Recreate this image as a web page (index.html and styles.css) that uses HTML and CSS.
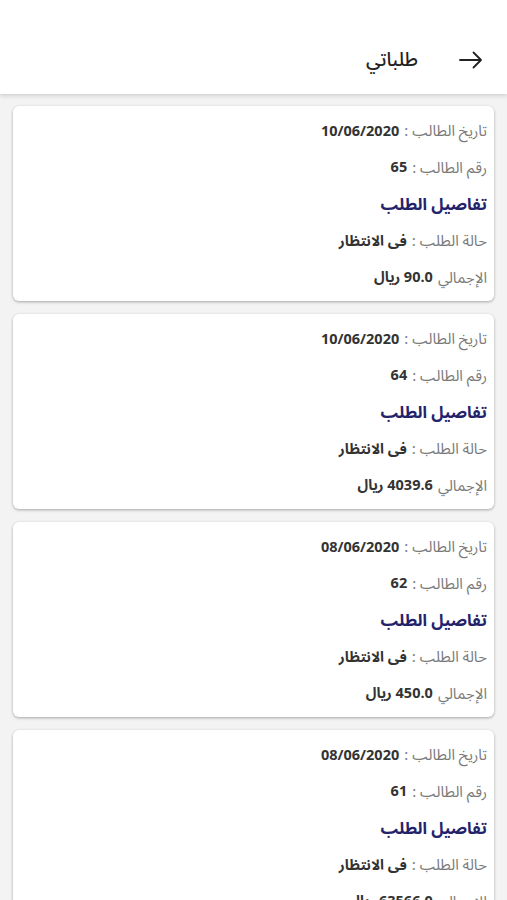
FILE: index.html
```html
<!DOCTYPE html>
<html lang="ar" dir="rtl">
<head>
<meta charset="utf-8">
<title>طلباتي</title>
<link rel="stylesheet" href="styles.css">
</head>
<body>
<header class="appbar">
  <button class="back" aria-label="رجوع">
    <svg width="26" height="24" viewBox="0 0 26 24"><path d="M2 12h21M15.5 4.5l7.5 7.5-7.5 7.5" fill="none" stroke="#222" stroke-width="1.8" stroke-linecap="round" stroke-linejoin="round"/></svg>
  </button>
  <h1 class="title">طلباتي</h1>
</header>
<main class="list">
  <section class="card">
    <div class="row"><span class="label">تاريخ الطالب :</span><span class="value">10/06/2020</span></div>
    <div class="row"><span class="label">رقم الطالب :</span><span class="value">65</span></div>
    <div class="row"><span class="details">تفاصيل الطلب</span></div>
    <div class="row"><span class="label">حالة الطلب :</span><span class="value">فى الانتظار</span></div>
    <div class="row"><span class="label">الإجمالي</span><span class="value">90.0 ريال</span></div>
  </section>
  <section class="card">
    <div class="row"><span class="label">تاريخ الطالب :</span><span class="value">10/06/2020</span></div>
    <div class="row"><span class="label">رقم الطالب :</span><span class="value">64</span></div>
    <div class="row"><span class="details">تفاصيل الطلب</span></div>
    <div class="row"><span class="label">حالة الطلب :</span><span class="value">فى الانتظار</span></div>
    <div class="row"><span class="label">الإجمالي</span><span class="value">4039.6 ريال</span></div>
  </section>
  <section class="card">
    <div class="row"><span class="label">تاريخ الطالب :</span><span class="value">08/06/2020</span></div>
    <div class="row"><span class="label">رقم الطالب :</span><span class="value">62</span></div>
    <div class="row"><span class="details">تفاصيل الطلب</span></div>
    <div class="row"><span class="label">حالة الطلب :</span><span class="value">فى الانتظار</span></div>
    <div class="row"><span class="label">الإجمالي</span><span class="value">450.0 ريال</span></div>
  </section>
  <section class="card">
    <div class="row"><span class="label">تاريخ الطالب :</span><span class="value">08/06/2020</span></div>
    <div class="row"><span class="label">رقم الطالب :</span><span class="value">61</span></div>
    <div class="row"><span class="details">تفاصيل الطلب</span></div>
    <div class="row"><span class="label">حالة الطلب :</span><span class="value">فى الانتظار</span></div>
    <div class="row"><span class="label">الإجمالي</span><span class="value">63566.0 ريال</span></div>
  </section>
</main>
</body>
</html>
```
FILE: styles.css
```css
* { box-sizing: border-box; }
html, body { margin: 0; padding: 0; }
body {
  width: 507px;
  height: 900px;
  overflow: hidden;
  background: #f3f3f3;
  font-family: "Noto Sans Arabic", "Noto Sans", "DejaVu Sans", sans-serif;
  color: #222;
}
.appbar {
  position: relative;
  z-index: 1;
  height: 94px;
  background: #fff;
  display: flex;
  align-items: center;
  padding: 36px 23px 10px 0;
  box-shadow: 0 2px 4px rgba(0,0,0,0.14);
}
.back {
  width: 26px;
  height: 24px;
  padding: 0;
  border: 0;
  background: none;
  display: flex;
}
.title {
  margin: 0 40px 0 0;
  font-size: 19px;
  font-weight: 500;
  color: #222;
}
.list {
  padding: 12px 13px;
  display: flex;
  flex-direction: column;
  gap: 13px;
}
.card {
  background: #fff;
  border-radius: 6px;
  box-shadow: 0 1px 3px rgba(0,0,0,0.32);
  padding: 7px 7px 5px;
  height: 195px;
  flex-shrink: 0;
}
.row {
  height: 36.6px;
  display: flex;
  align-items: center;
  gap: 5px;
}
.label {
  font-size: 15px;
  color: #7a7a7a;
}
.value {
  font-size: 14.5px;
  font-weight: 700;
  color: #333;
}
.details {
  font-size: 16.5px;
  font-weight: 700;
  color: #23236b;
}
```
